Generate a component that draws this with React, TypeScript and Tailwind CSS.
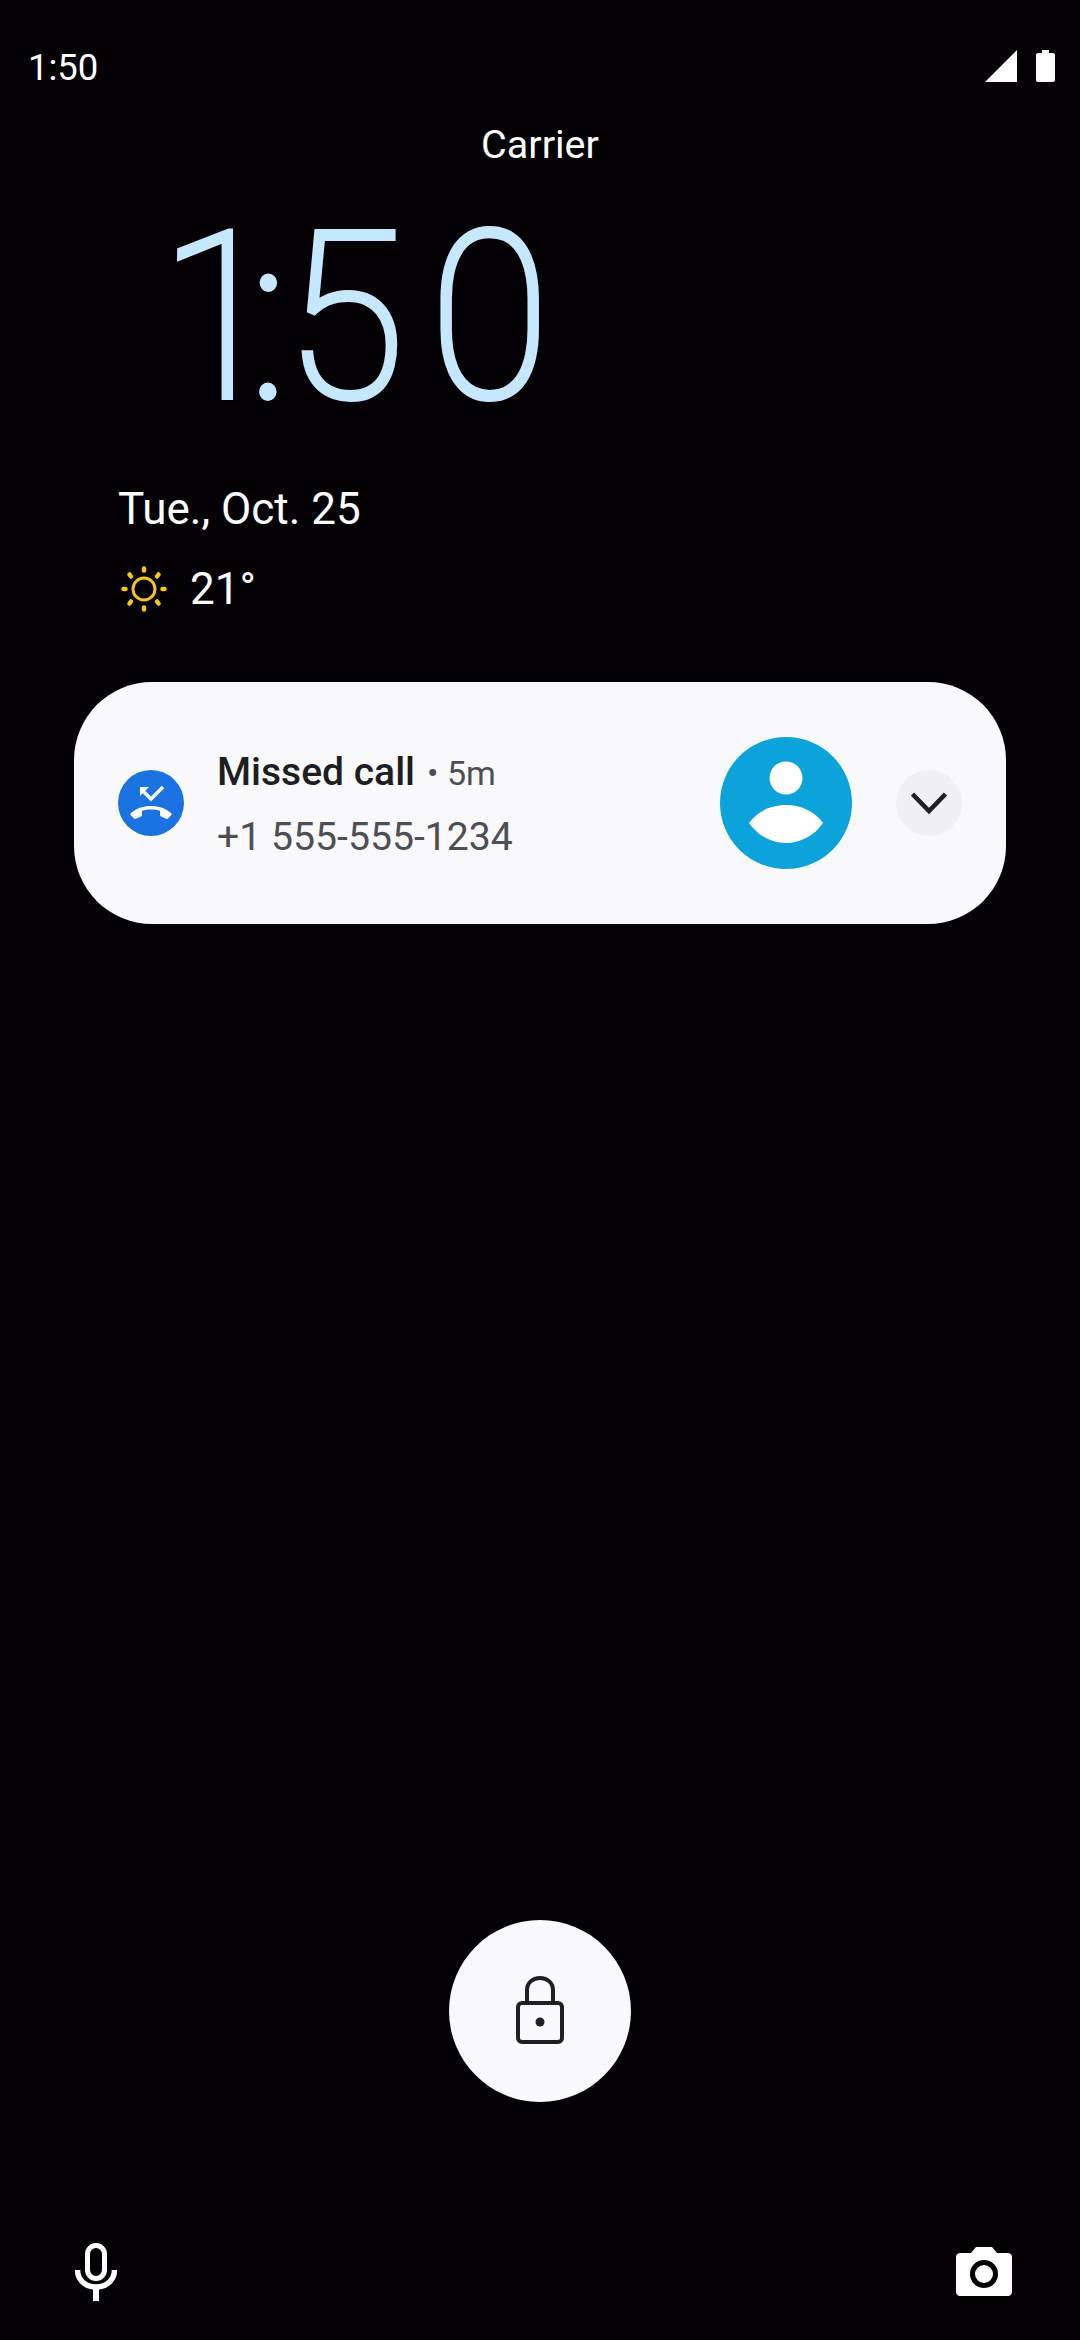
const roboto = { fontFamily: 'Roboto, "Liberation Sans", sans-serif' };

function SunIcon() {
  return (
    <svg width="48" height="48" viewBox="0 0 48 48" fill="none" stroke="#f5c518" strokeLinecap="round">
      <circle cx="24" cy="24" r="11" strokeWidth="3" />
      <g strokeWidth="4.500">
        <path d="M24 3.500v2M24 42.500v2M3.500 24h2M42.500 24h2" />
        <path d="M9.500 9.500l1.500 2M37 36.500l1.500 2M38.500 9.500l-1.500 2M11 36.500l-1.500 2" />
      </g>
    </svg>
  );
}

function MissedCallIcon() {
  return (
    <div className="flex h-[66px] w-[66px] items-center justify-center rounded-full bg-[#1a73e0]">
      <svg width="44" height="38" viewBox="0 0 44 38" fill="none">
        <path d="M14 7l8 8 12-12" stroke="#fff" strokeWidth="3.500" />
        <path d="M11 3h9l-9 9z" fill="#fff" />
        <path
          d="M2 29c10-9.500 30-9.500 40 0 .8.800.8 1.500.2 2.200l-3.200 3.400c-.6.600-1.300.6-2 .2l-5-2.400c-.7-.4-1-1-1-1.700v-4c-5-1.700-13-1.700-18 0v4c0 .7-.3 1.300-1 1.700l-5 2.400c-.7.400-1.400.4-2-.2l-3.200-3.400c-.6-.7-.6-1.400.2-2.200z"
          fill="#fff"
        />
      </svg>
    </div>
  );
}

function Avatar() {
  return (
    <div className="flex h-[132px] w-[132px] items-center justify-center rounded-full bg-[#0ba3d9]">
      <svg width="132" height="132" viewBox="0 0 132 132" fill="#fff">
        <circle cx="66" cy="41" r="16.500" />
        <path d="M29 86c8-11 21-18 37-18s29 7 37 18c-8 12-22 20-37 20s-29-8-37-20z" />
      </svg>
    </div>
  );
}

function LockIcon() {
  return (
    <svg width="50" height="70" viewBox="0 0 50 70" fill="none" stroke="#1f2024" strokeWidth="4">
      <path d="M12 27V14c0-7 5.500-12 13-12s13 5 13 12v13" />
      <rect x="3" y="27" width="44" height="39" rx="4" />
      <circle cx="25" cy="46" r="4.500" fill="#1f2024" stroke="none" />
    </svg>
  );
}

function MicIcon() {
  return (
    <svg width="42" height="58" viewBox="0 0 42 58" fill="none" stroke="#fff">
      <rect x="12.500" y="2.500" width="17" height="33" rx="8.500" strokeWidth="5" />
      <path d="M2.500 27c0 10 8 17 18.500 17s18.500-7 18.500-17" strokeWidth="5.500" />
      <path d="M21 43v15" strokeWidth="6" />
    </svg>
  );
}

function CameraIcon() {
  return (
    <svg width="56" height="50" viewBox="0 0 56 50">
      <path
        d="M4 7h11l5-6h16l5 6h11c2.200 0 4 1.800 4 4v35c0 2.200-1.800 4-4 4H4c-2.200 0-4-1.800-4-4V11c0-2.200 1.800-4 4-4z"
        fill="#fff"
      />
      <circle cx="28" cy="28" r="11.500" fill="none" stroke="#000" strokeWidth="5" />
    </svg>
  );
}

export default function App() {
  return (
    <div className="flex h-[2340px] w-[1080px] flex-col overflow-hidden bg-[#030104] text-white" style={roboto}>
      <div className="flex h-[132px] items-start justify-between pr-[25px] pl-[28px]">
        <span className="mt-[47px] text-[36.500px] leading-[41px]">1:50</span>
        <div className="mt-[50px] flex items-start gap-[19px]">
          <svg width="32" height="32" viewBox="0 0 32 32" fill="#fff">
            <path d="M32 0v32H0z" />
          </svg>
          <svg width="19" height="32" viewBox="0 0 19 32" fill="#fff">
            <path d="M6 0h7v3h4c1.200 0 2 .8 2 2v25c0 1.200-.8 2-2 2H2c-1.200 0-2-.8-2-2V5c0-1.200.8-2 2-2h4z" />
          </svg>
        </div>
      </div>

      <div className="text-center text-[39.500px] leading-[26px]">Carrier</div>

      <div className="mt-[45px] h-[230px] pl-[160px] font-thin text-[#c5e7ff]">
        <span className="inline-block origin-left scale-x-[0.94] text-[232px] leading-[230px] [-webkit-text-stroke:6px_#c5e7ff]">
          <span className="tracking-[-32px]">1</span>
          <span className="tracking-[-3px]">:</span>
          <span className="tracking-[27px]">5</span>
          <span>0</span>
        </span>
      </div>

      <div className="mt-[50px] pl-[118px] text-[44px] leading-[52px]">Tue., Oct. 25</div>

      <div className="mt-[28px] flex h-[52px] items-center gap-[22px] pl-[120px]">
        <SunIcon />
        <span className="text-[44px] leading-[52px]">21°</span>
      </div>

      <div className="mx-[74px] mt-[67px] flex h-[242px] items-center rounded-[78px] bg-[#f9f9fc] pr-[44px] pl-[44px]">
        <MissedCallIcon />
        <div className="mt-[2px] ml-[33px] flex-1">
          <div className="flex items-baseline pt-[1px]">
            <span className="text-[39px] leading-[50px] font-medium text-[#1d1e22]">Missed call</span>
            <span className="ml-[12px] text-[34px] text-[#4e4f54]">• 5m</span>
          </div>
          <div className="mt-[13px] text-[39.200px] leading-[50px] text-[#4e4f54]">+1 555-555-1234</div>
        </div>
        <Avatar />
        <div className="ml-[44px] flex h-[66px] w-[66px] items-center justify-center rounded-full bg-[#f0f0f2]">
          <svg width="36" height="24" viewBox="0 0 36 24" fill="none" stroke="#1f2024" strokeWidth="4.500">
            <path d="M1.500 3L18 20 34.500 3" />
          </svg>
        </div>
      </div>

      <div className="flex-1" />

      <div className="flex justify-center">
        <div className="flex h-[182px] w-[182px] items-center justify-center rounded-full bg-[#f9f9fb]">
          <LockIcon />
        </div>
      </div>

      <div className="mt-[141px] mb-[39px] flex items-end justify-between pr-[68px] pl-[75px]">
        <MicIcon />
        <div className="mb-[5px]">
          <CameraIcon />
        </div>
      </div>
    </div>
  );
}
